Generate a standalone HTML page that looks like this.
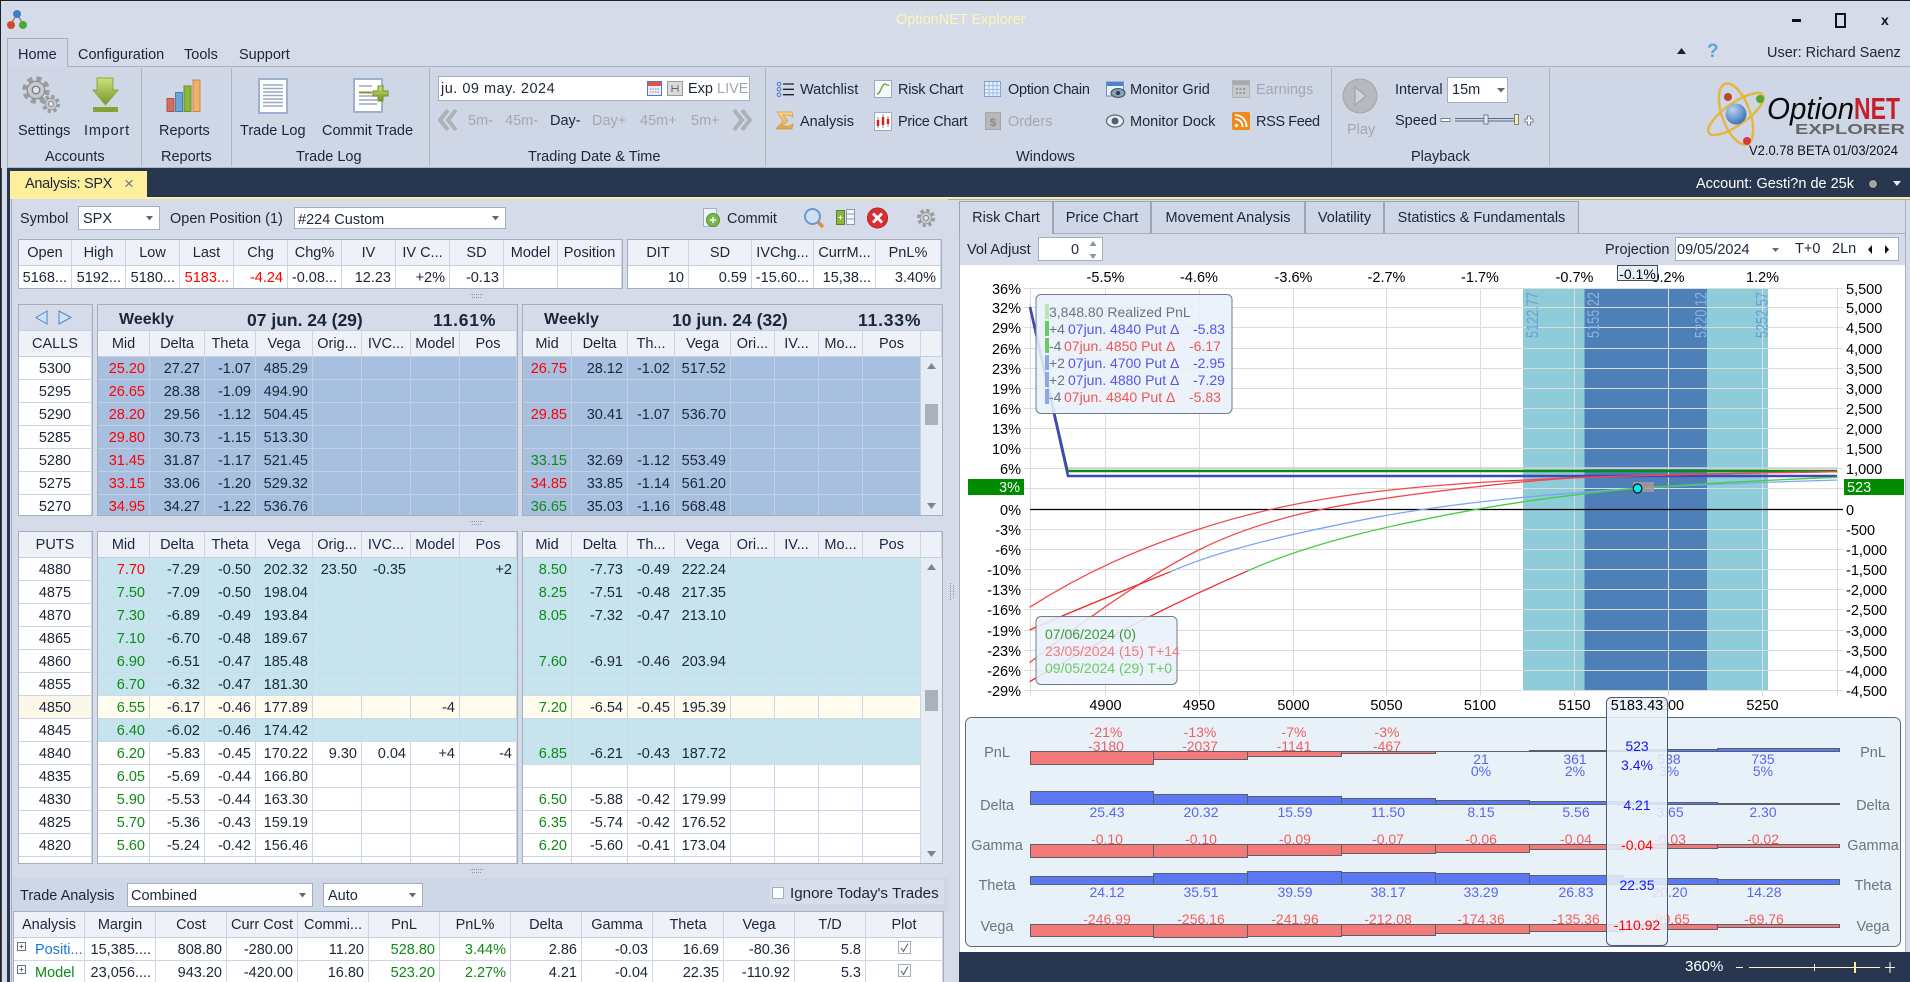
<!DOCTYPE html>
<html><head><meta charset="utf-8"><title>OptionNET Explorer</title>
<style>
html,body{margin:0;padding:0;background:#d5dbe9}
#p{position:relative;width:1910px;height:982px;overflow:hidden;background:#d5dbe9;font:14.5px/18px "Liberation Sans",sans-serif;color:#1c2638}
#p div{position:absolute}
.t{white-space:nowrap}
.gy{color:#a2a8b3}
.box{background:#fff;border:1px solid #a5afbf;box-sizing:border-box}
.w{border:1px solid #a5afbf;overflow:hidden;box-sizing:border-box;background:#fff}
table{border-collapse:separate;border-spacing:0;table-layout:fixed;font:14.5px/18px "Liberation Sans",sans-serif;color:#1c2638}
td,th{height:23px;box-sizing:border-box;padding:1px 4px 0 0;border-right:1px solid #cdd4e3;border-bottom:1px solid #cdd4e3;text-align:right;white-space:nowrap;overflow:hidden;font-weight:normal}
th{height:26px;text-align:center;padding:0;background:#eef1f7;border-bottom-color:#c6cddb}
tr.c td{background:#a8c0df;border-color:#c3d0e4}
tr.p td{background:#c5e4ed;border-color:#d3d8e6}
tr.y td{background:#fffcee}
td.s{text-align:center;padding:1px 0 0}
td.b,tr.c td.b,tr.p td.b,tr.y td.b{background:#e7ebf3;border:0}
tr.y td.s{background:#fbf8ea}
.R{color:#f00}.G{color:#0f8a17}
.tab{border:1px solid #9aa6b8;border-bottom:0;box-sizing:border-box;background:#cfd6e5;text-align:center;line-height:32px}
.ti{font-weight:bold;font-size:16px;top:311px}
.tn{font-weight:bold;font-size:17.5px;top:311px}
svg{position:absolute;left:0;top:0;font-family:"Liberation Sans",sans-serif;font-size:14.5px}
</style></head><body><div id="p">
<div style="left:0;top:0;width:1910px;height:1px;background:#222"></div>
<div style="left:0;top:0;width:1px;height:982px;background:#222"></div>
<div style="left:8px;top:67px;width:1902px;height:100px;background:#cfd7e7"></div>
<div style="left:8px;top:66px;width:1902px;height:1px;background:#a5afbf"></div>
<div style="left:7px;top:67px;width:1px;height:101px;background:#a5afbf"></div>
<div style="left:8px;top:167px;width:1902px;height:1px;background:#aeb6c4"></div>
<div style="left:7px;top:38px;width:61px;height:29px;background:#d3d9e8;border:1px solid #a5afbf;border-bottom:0;box-sizing:border-box"></div>
<div style="left:141px;top:68px;width:1px;height:98px;background:#aeb6c4"></div>
<div style="left:231px;top:68px;width:1px;height:98px;background:#aeb6c4"></div>
<div style="left:429px;top:68px;width:1px;height:98px;background:#aeb6c4"></div>
<div style="left:765px;top:68px;width:1px;height:98px;background:#aeb6c4"></div>
<div style="left:1331px;top:68px;width:1px;height:98px;background:#aeb6c4"></div>
<div style="left:1549px;top:68px;width:1px;height:98px;background:#aeb6c4"></div>
<!-- title -->
<div class="t" style="left:896px;top:11px;color:#fdf6b8">OptionNET Explorer</div>
<div class="t" style="left:18px;top:46px">Home</div>
<div class="t" style="left:78px;top:46px">Configuration</div>
<div class="t" style="left:184px;top:46px">Tools</div>
<div class="t" style="left:239px;top:46px">Support</div>
<div class="t" style="left:1767px;top:44px">User: Richard Saenz</div>
<div class="t" style="left:1707px;top:43px;color:#5ba7d8;font-weight:bold;font-size:19px">?</div>
<!-- ribbon labels -->
<div class="t" style="left:18px;top:122px">Settings</div>
<div class="t" style="left:84px;top:122px;letter-spacing:.8px">Import</div>
<div class="t" style="left:159px;top:122px">Reports</div>
<div class="t" style="left:240px;top:122px">Trade Log</div>
<div class="t" style="left:322px;top:122px">Commit Trade</div>
<div class="t" style="left:45px;top:148px">Accounts</div>
<div class="t" style="left:161px;top:148px">Reports</div>
<div class="t" style="left:296px;top:148px">Trade Log</div>
<div class="t" style="left:528px;top:148px">Trading Date &amp; Time</div>
<div class="t" style="left:1016px;top:148px">Windows</div>
<div class="t" style="left:1411px;top:148px">Playback</div>
<div class="box" style="left:438px;top:76px;width:312px;height:25px"></div>
<div class="t" style="left:441px;top:80px;letter-spacing:.5px">ju. 09 may. 2024</div>
<div class="t" style="left:688px;top:80px">Exp</div>
<div class="t gy" style="left:717px;top:80px">LIVE</div>
<div class="t gy" style="left:468px;top:112px">5m-</div>
<div class="t gy" style="left:505px;top:112px">45m-</div>
<div class="t" style="left:550px;top:112px">Day-</div>
<div class="t gy" style="left:592px;top:112px">Day+</div>
<div class="t gy" style="left:640px;top:112px">45m+</div>
<div class="t gy" style="left:691px;top:112px">5m+</div>
<div class="t" style="left:800px;top:81px">Watchlist</div>
<div class="t" style="left:898px;top:81px;letter-spacing:-.25px">Risk Chart</div>
<div class="t" style="left:1008px;top:81px;letter-spacing:-.25px">Option Chain</div>
<div class="t" style="left:1130px;top:81px">Monitor Grid</div>
<div class="t gy" style="left:1256px;top:81px">Earnings</div>
<div class="t" style="left:800px;top:113px">Analysis</div>
<div class="t" style="left:898px;top:113px;letter-spacing:-.3px">Price Chart</div>
<div class="t gy" style="left:1008px;top:113px">Orders</div>
<div class="t" style="left:1130px;top:113px">Monitor Dock</div>
<div class="t" style="left:1256px;top:113px;letter-spacing:-.4px">RSS Feed</div>
<div class="t gy" style="left:1347px;top:121px">Play</div>
<div class="t" style="left:1395px;top:81px">Interval</div>
<div class="box" style="left:1447px;top:77px;width:61px;height:26px"></div>
<div class="t" style="left:1452px;top:81px">15m</div>
<div class="t" style="left:1395px;top:112px">Speed</div>
<!-- dark bar -->
<div style="left:8px;top:168px;width:1902px;height:29px;background:#283650"></div>
<div style="left:7px;top:168px;width:3px;height:814px;background:#283650"></div>
<div style="left:1px;top:168px;width:1px;height:814px;background:#3b4658"></div>
<div style="left:10px;top:197px;width:1900px;height:2px;background:#fdef9c"></div>
<div style="left:10px;top:171px;width:137px;height:27px;background:#fdef9c"></div>
<div class="t" style="left:25px;top:175px;letter-spacing:-.3px">Analysis: SPX</div>
<div class="t" style="left:124px;top:175px;color:#6f7888;font-size:17px">×</div>
<div class="t" style="left:1696px;top:175px;color:#fff">Account: Gesti?n de 25k</div>
<!-- left panel -->
<div style="left:11px;top:199px;width:1px;height:783px;background:#a5afbf"></div>
<div class="t" style="left:20px;top:210px">Symbol</div>
<div class="box" style="left:78px;top:206px;width:82px;height:24px"></div>
<div class="t" style="left:83px;top:210px">SPX</div>
<div class="t" style="left:170px;top:210px">Open Position (1)</div>
<div class="box" style="left:294px;top:207px;width:212px;height:22px"></div>
<div class="t" style="left:298px;top:211px">#224 Custom</div>
<div class="t" style="left:727px;top:210px">Commit</div>
<!-- market tables -->
<div class="w" style="left:18px;top:239px;width:605px;height:50px"><table style="width:603px"><colgroup><col width="53"><col width="54"><col width="54"><col width="54"><col width="54"><col width="54"><col width="54"><col width="54"><col width="54"><col width="54"><col width="64"></colgroup>
<tr><th>Open<th>High<th>Low<th>Last<th>Chg<th>Chg%<th>IV<th>IV C...<th>SD<th>Model<th>Position</tr>
<tr><td>5168...<td>5192...<td>5180...<td class="R">5183...<td class="R">-4.24<td>-0.08...<td>12.23<td>+2%<td>-0.13<td><td></tr></table></div>
<div class="w" style="left:627px;top:239px;width:315px;height:50px"><table style="width:313px"><colgroup><col width="61"><col width="63"><col width="62"><col width="62"><col width="65"></colgroup>
<tr><th>DIT<th>SD<th>IVChg...<th>CurrM...<th>PnL%</tr>
<tr><td>10<td>0.59<td>-15.60...<td>15,38...<td>3.40%</tr></table></div>
<!-- calls strikes -->
<div class="w" style="left:18px;top:304px;width:75px;height:212px"><table style="width:73px"><colgroup><col width="73"></colgroup>
<tr><th style="background:#d5dbe9">&nbsp;</th></tr><tr><th>CALLS</th></tr>
<tr><td class="s">5300</tr><tr><td class="s">5295</tr><tr><td class="s">5290</tr><tr><td class="s">5285</tr><tr><td class="s">5280</tr><tr><td class="s">5275</tr><tr><td class="s">5270</tr></table></div>
<!-- calls 1 -->
<div class="w" style="left:97px;top:304px;width:421px;height:212px"><table style="width:419px"><colgroup><col width="52"><col width="55"><col width="51"><col width="57"><col width="49"><col width="49"><col width="49"><col width="57"></colgroup>
<tr><th colspan="8" style="background:#d5dbe9">&nbsp;</th></tr>
<tr><th>Mid<th>Delta<th>Theta<th>Vega<th>Orig...<th>IVC...<th>Model<th>Pos</tr>
<tr class="c"><td class="R">25.20<td>27.27<td>-1.07<td>485.29<td><td><td><td></tr>
<tr class="c"><td class="R">26.65<td>28.38<td>-1.09<td>494.90<td><td><td><td></tr>
<tr class="c"><td class="R">28.20<td>29.56<td>-1.12<td>504.45<td><td><td><td></tr>
<tr class="c"><td class="R">29.80<td>30.73<td>-1.15<td>513.30<td><td><td><td></tr>
<tr class="c"><td class="R">31.45<td>31.87<td>-1.17<td>521.45<td><td><td><td></tr>
<tr class="c"><td class="R">33.15<td>33.06<td>-1.20<td>529.32<td><td><td><td></tr>
<tr class="c"><td class="R">34.95<td>34.27<td>-1.22<td>536.76<td><td><td><td></tr>
</table></div>
<!-- calls 2 -->
<div class="w" style="left:522px;top:304px;width:421px;height:212px"><table style="width:419px"><colgroup><col width="49"><col width="56"><col width="47"><col width="56"><col width="44"><col width="44"><col width="44"><col width="58"><col width="21"></colgroup>
<tr><th colspan="9" style="background:#d5dbe9">&nbsp;</th></tr>
<tr><th>Mid<th>Delta<th>Th...<th>Vega<th>Ori...<th>IV...<th>Mo...<th>Pos<th></tr>
<tr class="c"><td class="R">26.75<td>28.12<td>-1.02<td>517.52<td><td><td><td><td class="b"></tr>
<tr class="c"><td><td><td><td><td><td><td><td><td class="b"></tr>
<tr class="c"><td class="R">29.85<td>30.41<td>-1.07<td>536.70<td><td><td><td><td class="b"></tr>
<tr class="c"><td><td><td><td><td><td><td><td><td class="b"></tr>
<tr class="c"><td class="G">33.15<td>32.69<td>-1.12<td>553.49<td><td><td><td><td class="b"></tr>
<tr class="c"><td class="R">34.85<td>33.85<td>-1.14<td>561.20<td><td><td><td><td class="b"></tr>
<tr class="c"><td class="G">36.65<td>35.03<td>-1.16<td>568.48<td><td><td><td><td class="b"></tr>
</table></div>
<div class="t ti" style="left:119px">Weekly</div><div class="t tn" style="left:247px">07 jun. 24 (29)</div><div class="t tn" style="left:433px;letter-spacing:.8px">11.61%</div>
<div class="t ti" style="left:544px">Weekly</div><div class="t tn" style="left:672px">10 jun. 24 (32)</div><div class="t tn" style="left:858px;letter-spacing:.8px">11.33%</div>
<!-- puts strikes -->
<div class="w" style="left:18px;top:531px;width:75px;height:333px"><table style="width:73px"><colgroup><col width="73"></colgroup>
<tr><th>PUTS</th></tr>
<tr><td class="s">4880</tr><tr><td class="s">4875</tr><tr><td class="s">4870</tr><tr><td class="s">4865</tr><tr><td class="s">4860</tr><tr><td class="s">4855</tr><tr class="y"><td class="s">4850</tr><tr><td class="s">4845</tr><tr><td class="s">4840</tr><tr><td class="s">4835</tr><tr><td class="s">4830</tr><tr><td class="s">4825</tr><tr><td class="s">4820</tr><tr><td class="s">&nbsp;</tr></table></div>
<!-- puts 1 -->
<div class="w" style="left:97px;top:531px;width:421px;height:333px"><table style="width:419px"><colgroup><col width="52"><col width="55"><col width="51"><col width="57"><col width="49"><col width="49"><col width="49"><col width="57"></colgroup>
<tr><th>Mid<th>Delta<th>Theta<th>Vega<th>Orig...<th>IVC...<th>Model<th>Pos</tr>
<tr class="p"><td class="R">7.70<td>-7.29<td>-0.50<td>202.32<td>23.50<td>-0.35<td><td>+2</tr>
<tr class="p"><td class="G">7.50<td>-7.09<td>-0.50<td>198.04<td><td><td><td></tr>
<tr class="p"><td class="G">7.30<td>-6.89<td>-0.49<td>193.84<td><td><td><td></tr>
<tr class="p"><td class="G">7.10<td>-6.70<td>-0.48<td>189.67<td><td><td><td></tr>
<tr class="p"><td class="G">6.90<td>-6.51<td>-0.47<td>185.48<td><td><td><td></tr>
<tr class="p"><td class="G">6.70<td>-6.32<td>-0.47<td>181.30<td><td><td><td></tr>
<tr class="y"><td class="G">6.55<td>-6.17<td>-0.46<td>177.89<td><td><td>-4<td></tr>
<tr class="p"><td class="G">6.40<td>-6.02<td>-0.46<td>174.42<td><td><td><td></tr>
<tr><td class="G">6.20<td>-5.83<td>-0.45<td>170.22<td>9.30<td>0.04<td>+4<td>-4</tr>
<tr><td class="G">6.05<td>-5.69<td>-0.44<td>166.80<td><td><td><td></tr>
<tr><td class="G">5.90<td>-5.53<td>-0.44<td>163.30<td><td><td><td></tr>
<tr><td class="G">5.70<td>-5.36<td>-0.43<td>159.19<td><td><td><td></tr>
<tr><td class="G">5.60<td>-5.24<td>-0.42<td>156.46<td><td><td><td></tr>
<tr><td><td><td><td><td><td><td><td></tr>
</table></div>
<!-- puts 2 -->
<div class="w" style="left:522px;top:531px;width:421px;height:333px"><table style="width:419px"><colgroup><col width="49"><col width="56"><col width="47"><col width="56"><col width="44"><col width="44"><col width="44"><col width="58"><col width="21"></colgroup>
<tr><th>Mid<th>Delta<th>Th...<th>Vega<th>Ori...<th>IV...<th>Mo...<th>Pos<th></tr>
<tr class="p"><td class="G">8.50<td>-7.73<td>-0.49<td>222.24<td><td><td><td><td class="b"></tr>
<tr class="p"><td class="G">8.25<td>-7.51<td>-0.48<td>217.35<td><td><td><td><td class="b"></tr>
<tr class="p"><td class="G">8.05<td>-7.32<td>-0.47<td>213.10<td><td><td><td><td class="b"></tr>
<tr class="p"><td><td><td><td><td><td><td><td><td class="b"></tr>
<tr class="p"><td class="G">7.60<td>-6.91<td>-0.46<td>203.94<td><td><td><td><td class="b"></tr>
<tr class="p"><td><td><td><td><td><td><td><td><td class="b"></tr>
<tr class="y"><td class="G">7.20<td>-6.54<td>-0.45<td>195.39<td><td><td><td><td class="b"></tr>
<tr class="p"><td><td><td><td><td><td><td><td><td class="b"></tr>
<tr class="p"><td class="G">6.85<td>-6.21<td>-0.43<td>187.72<td><td><td><td><td class="b"></tr>
<tr><td><td><td><td><td><td><td><td><td class="b"></tr>
<tr><td class="G">6.50<td>-5.88<td>-0.42<td>179.99<td><td><td><td><td class="b"></tr>
<tr><td class="G">6.35<td>-5.74<td>-0.42<td>176.52<td><td><td><td><td class="b"></tr>
<tr><td class="G">6.20<td>-5.60<td>-0.41<td>173.04<td><td><td><td><td class="b"></tr>
<tr><td><td><td><td><td><td><td><td><td class="b"></tr>
</table></div>
<!-- trade analysis -->
<div style="left:12px;top:878px;width:936px;height:33px;background:#cfd7e6"></div>
<div style="left:770px;top:880px;width:174px;height:24px;background:#d8dee9"></div>
<div class="t" style="left:20px;top:887px">Trade Analysis</div>
<div class="box" style="left:127px;top:883px;width:186px;height:24px"></div>
<div class="t" style="left:131px;top:887px">Combined</div>
<div class="box" style="left:323px;top:883px;width:100px;height:24px"></div>
<div class="t" style="left:328px;top:887px">Auto</div>
<div class="box" style="left:772px;top:887px;width:12px;height:12px"></div>
<div class="t" style="left:790px;top:885px;font-size:15.2px">Ignore Today's Trades</div>
<div class="w" style="left:13px;top:911px;width:931px;height:71px;border-bottom:0"><table style="width:929px"><colgroup><col width="71"><col width="71"><col width="71"><col width="71"><col width="71"><col width="71"><col width="71"><col width="71"><col width="71"><col width="71"><col width="71"><col width="71"><col width="77"></colgroup>
<tr><th>Analysis<th>Margin<th>Cost<th>Curr Cost<th>Commi...<th>PnL<th>PnL%<th>Delta<th>Gamma<th>Theta<th>Vega<th>T/D<th>Plot</tr>
<tr><td style="text-align:left;padding-left:21px;color:#1577e0">Positi...<td>15,385....<td>808.80<td>-280.00<td>11.20<td class="G">528.80<td class="G">3.44%<td>2.86<td>-0.03<td>16.69<td>-80.36<td>5.8<td></tr>
<tr><td style="text-align:left;padding-left:21px" class="G">Model<td>23,056....<td>943.20<td>-420.00<td>16.80<td class="G">523.20<td class="G">2.27%<td>4.21<td>-0.04<td>22.35<td>-110.92<td>5.3<td></tr>
</table></div>
<!-- right panel -->
<div style="left:959px;top:233px;width:947px;height:1px;background:#a5afbf"></div>
<div style="left:959px;top:234px;width:1px;height:718px;background:#a5afbf"></div>
<div style="left:1905px;top:199px;width:1px;height:753px;background:#a5afbf"></div>
<div style="left:948px;top:199px;width:962px;height:1px;background:#a5afbf"></div>
<div class="tab" style="left:959px;top:201px;width:94px;height:33px;background:#d5dbe9">Risk Chart</div>
<div class="tab" style="left:1053px;top:201px;width:98px;height:32px">Price Chart</div>
<div class="tab" style="left:1151px;top:201px;width:154px;height:32px">Movement Analysis</div>
<div class="tab" style="left:1305px;top:201px;width:79px;height:32px">Volatility</div>
<div class="tab" style="left:1384px;top:201px;width:195px;height:32px">Statistics &amp; Fundamentals</div>
<div style="left:960px;top:265px;width:945px;height:687px;background:#fff"></div>
<div class="t" style="left:967px;top:241px">Vol Adjust</div>
<div class="box" style="left:1038px;top:237px;width:65px;height:24px"></div>
<div class="t" style="left:1071px;top:241px">0</div>
<div class="t" style="left:1605px;top:241px">Projection</div>
<div class="box" style="left:1675px;top:237px;width:224px;height:24px"></div>
<div class="t" style="left:1677px;top:241px">09/05/2024</div>
<div class="t" style="left:1795px;top:240px">T+0</div>
<div class="t" style="left:1832px;top:240px">2Ln</div>
<div style="left:959px;top:952px;width:951px;height:30px;background:#283650"></div>
<div class="t" style="left:1685px;top:958px;color:#fff;font-size:15px">360%</div>

<svg width="1910" height="982" viewBox="0 0 1910 982">
<defs>
<symbol id="g" viewBox="-12 -12 24 24"><circle r="9" fill="none" stroke="#9a9da3" stroke-width="4" stroke-dasharray="4 3.07"/><circle r="7" fill="#c6c9ce" stroke="#8d9096"/><circle r="3" fill="#dfe3ea" stroke="#777"/></symbol>
<linearGradient id="gr" x1="0" y1="0" x2="0" y2="1"><stop offset="0" stop-color="#cfe27a"/><stop offset="1" stop-color="#74942a"/></linearGradient>
<linearGradient id="or" x1="0" y1="0" x2="0" y2="1"><stop offset="0" stop-color="#f8d98c"/><stop offset="1" stop-color="#e0a040"/></linearGradient>
<radialGradient id="bl" cx=".35" cy=".3" r=".8"><stop offset="0" stop-color="#b8d4f4"/><stop offset="1" stop-color="#2f68b0"/></radialGradient>
</defs>
<!-- app logo -->
<path d="M17 14L11 24M17 14L23 24" stroke="#888" stroke-width="1.5"/><circle cx="17" cy="14" r="4" fill="#3f7fc8"/><circle cx="11" cy="25" r="4" fill="#d6482c"/><circle cx="23" cy="25" r="4" fill="#4ea838"/>
<!-- window buttons -->
<rect x="1792" y="19" width="9" height="3" fill="#111"/><rect x="1836" y="14" width="9" height="13" fill="none" stroke="#111" stroke-width="2"/>
<text x="1881" y="25" font-weight="bold" font-size="14" fill="#111">x</text>
<path d="M1677 54h9l-4.500-6z" fill="#222"/>
<!-- ribbon big icons -->
<use href="#g" x="21" y="75" width="30" height="30"/><use href="#g" x="41" y="94" width="20" height="20"/>
<path d="M97 78h16v12h5l-12.500 15L93 90h4z" fill="url(#gr)" stroke="#8aa83a"/><rect x="93" y="107" width="25" height="5" fill="#84a432"/>
<rect x="167" y="98.500" width="7" height="13" fill="#d86a60" stroke="#b05048"/><rect x="175.500" y="92.500" width="7" height="19" fill="#6aa6d8" stroke="#4a80b0"/><rect x="184" y="86" width="7" height="25.500" fill="#8ab63a" stroke="#6a9030"/><rect x="193" y="80" width="7" height="31.500" fill="#f2b070" stroke="#c88848"/>
<rect x="259" y="79" width="28" height="34" fill="#fff" stroke="#9fb0cf" stroke-width="2"/><path d="M263 85h20M263 88.500h20M263 92h20M263 95.500h20M263 99h20M263 102.500h20M263 106h20" stroke="#98a8c6" stroke-width="1.500"/>
<rect x="354" y="79" width="28" height="33" fill="#fff" stroke="#9fb0cf" stroke-width="2"/><path d="M359 86h13M359 96h18M359 100h18M359 104h18" stroke="#98a8c6" stroke-width="1.500"/><path d="M359 92.500h13" stroke="#7a9a2a" stroke-width="2"/>
<path d="M378 86h5v5h5v5h-5v5h-5v-5h-5v-5h5z" fill="url(#gr)" stroke="#6f8f28"/>
<!-- date row -->
<rect x="647.500" y="81.500" width="14" height="14" fill="#eef" stroke="#5577bb"/><rect x="648" y="82" width="13" height="4" fill="#d8574a"/><path d="M650 89h9M650 92h9" stroke="#88a" stroke-dasharray="1.500 1"/>
<rect x="667.500" y="81.500" width="15" height="14" fill="#d9dbdf" stroke="#9a9a9a"/><path d="M672 85v7M678 85v7M672 88.500h3M675 88.500h3" stroke="#666"/>
<path d="M448 110l-8 10 8 10M456 110l-8 10 8 10M734 110l8 10-8 10M742 110l8 10-8 10" fill="none" stroke="#aeb2b8" stroke-width="4"/>
<!-- window icons -->
<circle cx="779" cy="84" r="1.800" fill="none" stroke="#4a78c0"/><circle cx="779" cy="89.300" r="1.800" fill="none" stroke="#4a78c0"/><circle cx="779" cy="94.700" r="1.800" fill="none" stroke="#4a78c0"/><path d="M783 84h11M783 89.300h11M783 94.700h11" stroke="#222" stroke-width="1.300"/>
<rect x="874.500" y="80.500" width="17" height="17" fill="#f6f8fb" stroke="#99aacc"/><path d="M877 94c2.500 0 3-3 4-5s2-5 4-5c1.500 0 2 2 4 1" fill="none" stroke="#6a9a30" stroke-width="1.300"/>
<rect x="984.500" y="81.500" width="16" height="15" fill="#e6effa" stroke="#7aa2d8"/><path d="M985 85.500h16M985 89.500h16M985 93h16M989 82v14M993 82v14M997 82v14" stroke="#9bbce4"/>
<rect x="1106.500" y="82" width="17" height="14" fill="#eaf0f8" stroke="#6a92c8"/><rect x="1107" y="82" width="16" height="4" fill="#4e84c8"/><ellipse cx="1118" cy="93" rx="7" ry="4.500" fill="#8a9fb8" stroke="#3a4a60"/><circle cx="1118" cy="93" r="2" fill="#2a3a50"/>
<rect x="1232.500" y="80.500" width="17" height="17" fill="#c6c8ca" stroke="#b0b2b4"/><rect x="1233" y="81" width="16" height="4" fill="#a8aaac"/><path d="M1236 89h10M1236 93h10" stroke="#9a9c9e" stroke-width="2" stroke-dasharray="2 1.500"/>
<path d="M777 112h15l1 5-4-2h-6l5 6-6 5h7l4-2-1 5h-16l7-8z" fill="url(#or)" stroke="#d89a3a" stroke-width=".7"/>
<rect x="874.500" y="112.500" width="17" height="18" fill="#fff" stroke="#99aacc"/><path d="M878 117v11M883 114v14M888 116v11" stroke="#888"/><path d="M878 120v6M883 117v8M888 119v5" stroke="#d02818" stroke-width="2.500"/>
<rect x="985.500" y="112.500" width="15" height="17" fill="#b5b7b9" stroke="#a5a7a9"/><text x="993" y="126" text-anchor="middle" font-size="11" font-weight="bold" fill="#888">$</text>
<ellipse cx="1115" cy="121" rx="8.500" ry="6" fill="#e8edf2" stroke="#5a6a7a" stroke-width="1.300"/><circle cx="1115" cy="121" r="3.500" fill="#4a6078"/>
<rect x="1232" y="112" width="18" height="18" rx="2" fill="#f08a1a"/><circle cx="1236.500" cy="125.500" r="1.600" fill="#fff"/><path d="M1235 119a7.500 7.500 0 0 1 7.500 8M1235 115a11.500 11.500 0 0 1 11.500 12" fill="none" stroke="#fff" stroke-width="1.800"/>
<!-- playback -->
<circle cx="1360" cy="96" r="17" fill="#b6b9bd" stroke="#a5a8ac"/><path d="M1355 87l11 9-11 9z" fill="#cfd2d6" stroke="#9a9da2"/>
<path d="M1497 88h8l-4 4.500z" fill="#667"/>
<rect x="1441" y="118.500" width="9" height="3" fill="#fff" stroke="#5a6a80" stroke-width=".8"/><path d="M1455 118.500h60M1455 121h60" stroke="#5a6a80" stroke-width="1"/><rect x="1484" y="115" width="4" height="9" fill="#e8edf3" stroke="#5a6a80" stroke-width=".8"/><rect x="1514.500" y="114.500" width="4" height="10" fill="#fdef9c" stroke="#5a6a80" stroke-width=".8"/>
<path d="M1527.500 116h3v3h2.500v3h-2.500v3h-3v-3h-2.500v-3h2.500z" fill="#fff" stroke="#5a6a80" stroke-width=".8"/>
<!-- logo -->
<g fill="none" stroke="#e2b840" stroke-width="2.500"><ellipse cx="1736" cy="114" rx="14" ry="32" transform="rotate(-20 1736 114)"/><ellipse cx="1736" cy="114" rx="33" ry="11" transform="rotate(-35 1736 114)"/></g>
<circle cx="1736" cy="114" r="10.500" fill="url(#bl)"/><circle cx="1728" cy="97" r="4" fill="#b8482a"/><circle cx="1760" cy="99" r="4" fill="#55a535"/><circle cx="1747" cy="141" r="4" fill="#d83a3a"/>
<text x="1767" y="119" font-size="31" font-style="italic" fill="#0a0a0a" textLength="87" lengthAdjust="spacingAndGlyphs">Option</text>
<text x="1854" y="119" font-size="31" font-weight="bold" fill="#c4202c" textLength="46" lengthAdjust="spacingAndGlyphs">NET</text>
<text x="1795" y="134" font-size="15" font-weight="bold" fill="#666" textLength="110" lengthAdjust="spacingAndGlyphs">EXPLORER</text>
<text x="1749" y="155" font-size="14" fill="#111" textLength="149" lengthAdjust="spacingAndGlyphs">V2.0.78 BETA 01/03/2024</text>
<circle cx="1873" cy="184" r="4.500" fill="#a2a6ac" stroke="#222"/><path d="M1893 181h8l-4 5z" fill="#e6eaf2"/>
<!-- arrows -->
<path d="M47 311L36 317.500L47 324zM59 311L71 317.500L59 324z" fill="#cfe0f4" stroke="#4a88cc"/>
<path d="M146 216h7l-3.500 4.500zM492 216h7l-3.500 4.500zM299 893h7l-3.500 4.500zM409 893h7l-3.500 4.500z" fill="#667"/>
<path d="M1772 248h7l-3.500 4z" fill="#667"/>
<path d="M1089.500 246l3.500-5 3.500 5zM1089.500 254l3.500 5 3.500-5z" fill="#8a94a4"/>
<path d="M1872 245v9l-4-4.500zM1885 245v9l4-4.500z" fill="#111"/>
<!-- scrollbars -->
<path d="M927 369l4.500-6 4.500 6zM927 503l4.500 6 4.500-6zM927 570l4.500-6 4.500 6zM927 851l4.500 6 4.500-6z" fill="#7a8494"/>
<rect x="925" y="404" width="13" height="21" fill="#a9b1bc"/><rect x="925" y="690" width="13" height="21" fill="#a9b1bc"/>
<path d="M470 294.500h14M472 297.500h10M470 521.500h14M472 524.500h10M470 869.500h14M472 872.500h10" stroke="#8a94a4" stroke-dasharray="1 1"/>
<path d="M950.500 583v17M953.500 585v13" stroke="#8a94a4" stroke-dasharray="1 1"/>
<!-- commit row icons -->
<rect x="703.500" y="208.500" width="13" height="18" fill="#eef3fb" stroke="#9fb0cf"/><circle cx="713" cy="220" r="6.500" fill="#7ab84a" stroke="#5a9030"/><path d="M710 220h6M713 217v6" stroke="#fff" stroke-width="1.500"/>
<path d="M818 222l5 5" stroke="#d89048" stroke-width="3.500"/><circle cx="812.500" cy="216.500" r="7.500" fill="#cfe0f4" stroke="#6a9ad0" stroke-width="2"/>
<rect x="836.500" y="210.500" width="8" height="14" fill="#8ab63a" stroke="#5a8028"/><rect x="846.500" y="209.500" width="8" height="15" fill="#f4f6fa" stroke="#8a9ab4"/><path d="M847 214h7M847 219h7" stroke="#8a9ab4"/><path d="M838.500 217.500h4M840.500 215.500v4" stroke="#fff"/>
<circle cx="877.500" cy="218" r="10" fill="#d83030" stroke="#b82020"/><path d="M873 213.500l9 9M882 213.500l-9 9" stroke="#fff" stroke-width="2.800"/>
<use href="#g" x="916" y="208" width="20" height="20"/>
<!-- bottom table icons -->
<g fill="none" stroke="#6a7484"><rect x="17.500" y="942.500" width="8" height="8"/><path d="M19.500 946.500h4M21.500 944.500v4"/><rect x="17.500" y="965.500" width="8" height="8"/><path d="M19.500 969.500h4M21.500 967.500v4"/><rect x="898.500" y="941.500" width="12" height="12" stroke="#a5afbf"/><rect x="898.500" y="964.500" width="12" height="12" stroke="#a5afbf"/><path d="M901 948l2.500 3.500 4.500-8M901 971l2.500 3.500 4.500-8" stroke="#556"/></g>

<!-- CHART -->
<rect x="1523" y="288" width="245" height="402" fill="#8fccd9"/><rect x="1584.500" y="288" width="122.500" height="402" fill="#4e7fb9"/>
<g stroke="#dcdcdc" stroke-width="1"><path d="M1105.500 288V696M1199.500 288V696M1293.500 288V696M1386.500 288V696M1480.500 288V696M1574.500 288V696M1668.500 288V696M1762.500 288V696M1837.500 288V696M1030.500 288V696"/>
<path d="M1024 288.500H1843M1024 307.500H1843M1024 327.500H1843M1024 348.500H1843M1024 368.500H1843M1024 388.500H1843M1024 408.500H1843M1024 428.500H1843M1024 448.500H1843M1024 468.500H1843M1024 488.500H1843M1024 529.500H1843M1024 549.500H1843M1024 569.500H1843M1024 589.500H1843M1024 609.500H1843M1024 630.500H1843M1024 650.500H1843M1024 670.500H1843M1024 690.500H1843"/></g>
<g font-size="17"><text transform="translate(1538,338) rotate(-90)" fill="#6a9fd0" textLength="46" lengthAdjust="spacingAndGlyphs">5122.77</text><text transform="translate(1599,338) rotate(-90)" fill="#8ab4dc" textLength="46" lengthAdjust="spacingAndGlyphs">5155.22</text><text transform="translate(1706.500,338) rotate(-90)" fill="#8ab4dc" textLength="46" lengthAdjust="spacingAndGlyphs">5220.12</text><text transform="translate(1767.500,338) rotate(-90)" fill="#6a9fd0" textLength="46" lengthAdjust="spacingAndGlyphs">5252.57</text></g>
<path d="M1030 304L1067 468H1837" fill="none" stroke="#cfcfcf" stroke-width="1.500"/>
<polyline points="1030,307 1067.500,471 1837,471" fill="none" stroke="#0a8a14" stroke-width="2.500"/>
<polyline points="1030,307 1068,476 1837,476" fill="none" stroke="#4444bb" stroke-width="2.500"/>
<path d="M1030 509.500H1843" stroke="#000" stroke-width="1.200"/>
<g fill="none" stroke-width="1.300">
<path stroke="#f24848" d="M1029.600 607.300C1085 572 1140 548 1198.600 529.300C1260 509 1325 497 1390.900 490C1455 483 1520 480 1584.400 477.300C1670 474.500 1750 473 1837.300 471.700"/>
<path stroke="#f24848" d="M1029.600 662.700C1085 620 1140 580 1198.600 550C1265 517 1335 505 1409.300 495C1470 487 1530 480 1584.400 477.300C1670 474.500 1750 473 1837.300 471.700"/>
<path stroke="#7ba7f0" d="M1170.500 571.700C1225 548 1300 532 1378.700 516.700C1460 502 1550 494 1637.700 488.300C1700 484.500 1770 482 1837.300 480"/>
<path stroke="#f02828" d="M1029.600 630C1075 610 1125 590 1170.500 571.700"/>
<path stroke="#44cc44" d="M1248.200 570.700C1310 543 1390 525 1476.600 509.300C1530 500 1585 493 1637.700 488.300C1700 483.500 1770 480 1837.300 477.300"/>
<path stroke="#f02828" d="M1029.600 681.700C1100 640 1180 600 1248.200 570.700"/>
</g>
<rect x="1633" y="482" width="21" height="10" fill="#a89a9a" fill-opacity=".8"/><ellipse cx="1637.500" cy="488.500" rx="4.300" ry="4.500" fill="#00e8f0" stroke="#111" stroke-width="1.200"/>
<!-- axis labels -->
<g text-anchor="end"><text x="1021" y="294">36%</text><text x="1021" y="313">32%</text><text x="1021" y="333">29%</text><text x="1021" y="354">26%</text><text x="1021" y="374">23%</text><text x="1021" y="394">19%</text><text x="1021" y="414">16%</text><text x="1021" y="434">13%</text><text x="1021" y="454">10%</text><text x="1021" y="474">6%</text><text x="1021" y="515">0%</text><text x="1021" y="535">-3%</text><text x="1021" y="555">-6%</text><text x="1021" y="575">-10%</text><text x="1021" y="595">-13%</text><text x="1021" y="615">-16%</text><text x="1021" y="636">-19%</text><text x="1021" y="656">-23%</text><text x="1021" y="676">-26%</text><text x="1021" y="696">-29%</text></g>
<g><text x="1846" y="294">5,500</text><text x="1846" y="313">5,000</text><text x="1846" y="333">4,500</text><text x="1846" y="354">4,000</text><text x="1846" y="374">3,500</text><text x="1846" y="394">3,000</text><text x="1846" y="414">2,500</text><text x="1846" y="434">2,000</text><text x="1846" y="454">1,500</text><text x="1846" y="474">1,000</text><text x="1846" y="515">0</text><text x="1846" y="535">-500</text><text x="1846" y="555">-1,000</text><text x="1846" y="575">-1,500</text><text x="1846" y="595">-2,000</text><text x="1846" y="615">-2,500</text><text x="1846" y="636">-3,000</text><text x="1846" y="656">-3,500</text><text x="1846" y="676">-4,000</text><text x="1846" y="696">-4,500</text></g>
<rect x="968" y="479" width="56" height="16" fill="#008a00"/><text x="1020" y="492" text-anchor="end" fill="#fff">3%</text>
<rect x="1844" y="479" width="60" height="16" fill="#008a00"/><text x="1847" y="492" fill="#fff">523</text>
<g text-anchor="middle"><text x="1105.500" y="282">-5.5%</text><text x="1199" y="282">-4.6%</text><text x="1293.500" y="282">-3.6%</text><text x="1386.500" y="282">-2.7%</text><text x="1480" y="282">-1.7%</text><text x="1574.500" y="282">-0.7%</text><text x="1668" y="282">0.2%</text><text x="1762.500" y="282">1.2%</text>
<text x="1105.500" y="710">4900</text><text x="1199" y="710">4950</text><text x="1293.500" y="710">5000</text><text x="1386.500" y="710">5050</text><text x="1480" y="710">5100</text><text x="1574.500" y="710">5150</text><text x="1668" y="710">5200</text><text x="1762.500" y="710">5250</text></g>
<rect x="1617.500" y="265.500" width="40" height="15" fill="#e8eef6" stroke="#3c4c60"/><text x="1637.500" y="279" text-anchor="middle" font-size="14">-0.1%</text>
<!-- tooltip -->
<rect x="1036" y="294.500" width="196" height="119" rx="5" fill="#e9f0f9" fill-opacity=".88" stroke="#6a7d93"/>
<rect x="1045" y="304" width="4" height="15" fill="#b8e8b0"/><rect x="1045" y="321" width="4" height="15" fill="#66cc66"/><rect x="1045" y="338" width="4" height="15" fill="#66cc66"/><rect x="1045" y="355" width="4" height="15" fill="#8aa8e8"/><rect x="1045" y="372" width="4" height="15" fill="#8aa8e8"/><rect x="1045" y="389" width="4" height="15" fill="#8aa8e8"/>
<g font-size="14"><text x="1049" y="317" fill="#6a7484">3,848.80 Realized PnL</text>
<text x="1049" y="334" fill="#6a7484">+4</text><text x="1068" y="334" fill="#5555ee">07jun. 4840 Put Δ</text><text x="1193" y="334" fill="#5555ee">-5.83</text>
<text x="1049" y="351" fill="#6a7484">-4</text><text x="1064" y="351" fill="#f25555">07jun. 4850 Put Δ</text><text x="1189" y="351" fill="#f25555">-6.17</text>
<text x="1049" y="368" fill="#6a7484">+2</text><text x="1068" y="368" fill="#5555ee">07jun. 4700 Put Δ</text><text x="1193" y="368" fill="#5555ee">-2.95</text>
<text x="1049" y="385" fill="#6a7484">+2</text><text x="1068" y="385" fill="#5555ee">07jun. 4880 Put Δ</text><text x="1193" y="385" fill="#5555ee">-7.29</text>
<text x="1049" y="402" fill="#6a7484">-4</text><text x="1064" y="402" fill="#f25555">07jun. 4840 Put Δ</text><text x="1189" y="402" fill="#f25555">-5.83</text></g>
<rect x="1036" y="616.500" width="141" height="68" rx="5" fill="#e9f0f9" fill-opacity=".88" stroke="#6a7d93"/>
<g font-size="14"><text x="1045" y="639" fill="#3a9a3a">07/06/2024 (0)</text><text x="1045" y="656" fill="#f27a7a">23/05/2024 (15) T+14</text><text x="1045" y="673" fill="#66cc66">09/05/2024 (29) T+0</text></g>
<!-- lower panel -->
<rect x="965.500" y="717.500" width="935" height="229" rx="6" fill="#e8f0f8" stroke="#5a6b80"/>
<g fill="#f47a7a" stroke="#5a5f6a"><rect x="1030.500" y="751.500" width="123" height="13"/><rect x="1153.500" y="751.500" width="94" height="8"/><rect x="1247.500" y="751.500" width="94" height="5"/><rect x="1341.500" y="751.500" width="94" height="2"/>
<rect x="1030.500" y="844.500" width="123" height="13"/><rect x="1153.500" y="844.500" width="94" height="13"/><rect x="1247.500" y="844.500" width="94" height="11"/><rect x="1341.500" y="844.500" width="94" height="9"/><rect x="1435.500" y="844.500" width="94" height="8"/><rect x="1529.500" y="844.500" width="94" height="5"/><rect x="1623.500" y="844.500" width="94" height="4"/><rect x="1717.500" y="844.500" width="122" height="3"/>
<rect x="1030.500" y="924.500" width="123" height="12"/><rect x="1153.500" y="924.500" width="94" height="13"/><rect x="1247.500" y="924.500" width="94" height="12"/><rect x="1341.500" y="924.500" width="94" height="11"/><rect x="1435.500" y="924.500" width="94" height="9"/><rect x="1529.500" y="924.500" width="94" height="7"/><rect x="1623.500" y="924.500" width="94" height="5"/><rect x="1717.500" y="924.500" width="122" height="3"/></g>
<path d="M1435 751.500H1529" stroke="#5a5f6a"/>
<g fill="#5b78f5" stroke="#5a5f6a"><rect x="1529.500" y="750.500" width="94" height="1"/><rect x="1623.500" y="749.500" width="94" height="2"/><rect x="1717.500" y="748.500" width="122" height="3"/>
<rect x="1030.500" y="791.500" width="123" height="13"/><rect x="1153.500" y="794.500" width="94" height="10"/><rect x="1247.500" y="796.500" width="94" height="8"/><rect x="1341.500" y="798.500" width="94" height="6"/><rect x="1435.500" y="800.500" width="94" height="4"/><rect x="1529.500" y="801.500" width="94" height="3"/><rect x="1623.500" y="802.500" width="94" height="2"/><rect x="1717.500" y="803.500" width="122" height="1"/>
<rect x="1030.500" y="876.500" width="123" height="8"/><rect x="1153.500" y="873.500" width="94" height="11"/><rect x="1247.500" y="871.500" width="94" height="13"/><rect x="1341.500" y="872.500" width="94" height="12"/><rect x="1435.500" y="873.500" width="94" height="11"/><rect x="1529.500" y="875.500" width="94" height="9"/><rect x="1623.500" y="878.500" width="94" height="6"/><rect x="1717.500" y="879.500" width="122" height="5"/></g>
<g text-anchor="middle" fill="#6a7484"><text x="997" y="757">PnL</text><text x="997" y="810">Delta</text><text x="997" y="850">Gamma</text><text x="997" y="890">Theta</text><text x="997" y="931">Vega</text><text x="1873" y="757">PnL</text><text x="1873" y="810">Delta</text><text x="1873" y="850">Gamma</text><text x="1873" y="890">Theta</text><text x="1873" y="931">Vega</text></g>
<g text-anchor="middle" fill="#f25f5f" font-size="14"><text x="1106" y="737">-21%</text><text x="1200" y="737">-13%</text><text x="1294" y="737">-7%</text><text x="1387" y="737">-3%</text><text x="1106" y="751">-3180</text><text x="1200" y="751">-2037</text><text x="1294" y="751">-1141</text><text x="1387" y="751">-467</text>
<text x="1107" y="844">-0.10</text><text x="1201" y="844">-0.10</text><text x="1295" y="844">-0.09</text><text x="1388" y="844">-0.07</text><text x="1481" y="844">-0.06</text><text x="1576" y="844">-0.04</text><text x="1670" y="844">-0.03</text><text x="1763" y="844">-0.02</text>
<text x="1107" y="924">-246.99</text><text x="1201" y="924">-256.16</text><text x="1295" y="924">-241.96</text><text x="1388" y="924">-212.08</text><text x="1481" y="924">-174.36</text><text x="1576" y="924">-135.36</text><text x="1670" y="924">-99.65</text><text x="1764" y="924">-69.76</text></g>
<g text-anchor="middle" fill="#5a68ee" font-size="14"><text x="1481" y="764">21</text><text x="1481" y="776">0%</text><text x="1575" y="764">361</text><text x="1575" y="776">2%</text><text x="1669" y="764">538</text><text x="1669" y="776">3%</text><text x="1763" y="764">735</text><text x="1763" y="776">5%</text>
<text x="1107" y="817">25.43</text><text x="1201" y="817">20.32</text><text x="1295" y="817">15.59</text><text x="1388" y="817">11.50</text><text x="1481" y="817">8.15</text><text x="1576" y="817">5.56</text><text x="1670" y="817">3.65</text><text x="1763" y="817">2.30</text>
<text x="1107" y="897">24.12</text><text x="1201" y="897">35.51</text><text x="1295" y="897">39.59</text><text x="1388" y="897">38.17</text><text x="1481" y="897">33.29</text><text x="1576" y="897">26.83</text><text x="1670" y="897">20.20</text><text x="1764" y="897">14.28</text></g>
<rect x="1606.500" y="697.500" width="61" height="248" rx="5" fill="#e8f0f8" fill-opacity=".87" stroke="#4a5a70"/>
<text x="1637" y="710" text-anchor="middle">5183.43</text>
<g text-anchor="middle" font-size="14"><text x="1637" y="751" fill="#1818ee">523</text><text x="1637" y="770" fill="#1818ee">3.4%</text><text x="1637" y="810" fill="#1818ee">4.21</text><text x="1637" y="850" fill="#f00">-0.04</text><text x="1637" y="890" fill="#1818ee">22.35</text><text x="1637" y="930" fill="#f00">-110.92</text></g>
<!-- zoom bar -->
<path d="M1736 967.500h7M1885 967.500h10M1890 962v11" stroke="#fff" stroke-width="1"/><path d="M1749 967.500h131" stroke="#fdf4c0"/><path d="M1814.500 964v7" stroke="#fdf4c0"/><rect x="1854" y="962" width="2" height="11" fill="#fdef9c"/>
</svg>
</div></body></html>
